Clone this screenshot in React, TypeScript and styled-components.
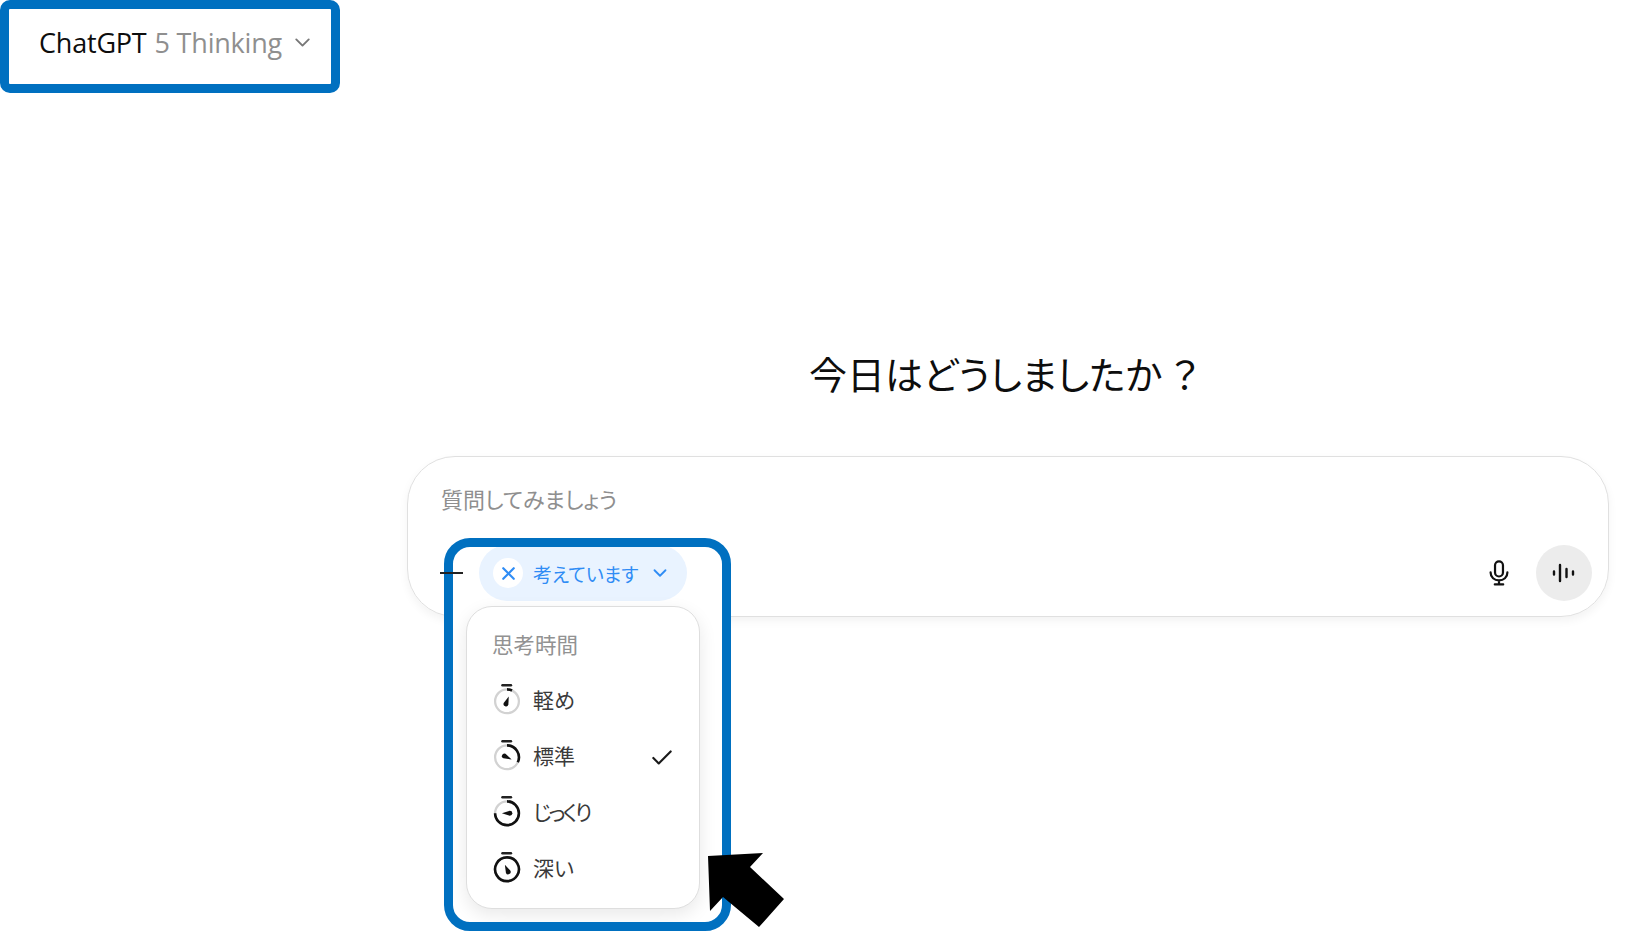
import { createGlobalStyle, styled } from "styled-components";
import { Check, ChevronDown, X } from "lucide-react";

const CJK = `"Noto Sans CJK JP", "Open Sans", sans-serif`;

const GlobalStyle = createGlobalStyle`
  html, body {
    margin: 0;
    padding: 0;
    background: #fff;
  }
`;

const Page = styled.div`
  position: relative;
  width: 1629px;
  height: 931px;
  overflow: hidden;
  background: #fff;
  font-family: ${CJK};
  font-feature-settings: "palt";
  color: #0d0d0d;
`;

const ModelBox = styled.div`
  box-sizing: border-box;
  width: 340px;
  height: 93px;
  padding: 0 0 8px 30px;
  display: flex;
  align-items: center;
  gap: 8px;
  border: 9px solid #0070c0;
  border-radius: 10px;
  font-family: "Open Sans", sans-serif;
  font-size: 27px;
  letter-spacing: -0.2px;
  white-space: nowrap;
`;

const ModelName = styled.span`
  color: #8f8f8f;
`;

const ModelChevron = styled(ChevronDown)`
  width: 25px;
  height: 25px;
  color: #777;
`;

const Heading = styled.h1`
  margin: 250px 0 0 809px;
  height: 60px;
  font-size: 38px;
  line-height: 60px;
  font-weight: 400;
  white-space: nowrap;
`;

const WideMark = styled.span`
  font-feature-settings: normal;
  margin-left: 4px;
`;

const Composer = styled.div`
  position: relative;
  box-sizing: border-box;
  width: 1202px;
  height: 161px;
  margin: 53px 0 0 407px;
  padding: 25px 16px 15px 33px;
  display: flex;
  flex-direction: column;
  justify-content: space-between;
  border: 1px solid #e0e0e0;
  border-radius: 48px;
  box-shadow: 0 4px 10px rgba(0, 0, 0, 0.05);
`;

const Placeholder = styled.div`
  font-size: 22px;
  line-height: 32px;
  color: #8f8f8f;
`;

const ComposerActions = styled.div`
  display: flex;
  justify-content: flex-end;
  align-items: center;
  gap: 23px;
`;

const MicIcon = styled.svg`
  width: 28px;
  height: 28px;
`;

const VoiceButton = styled.div`
  width: 56px;
  height: 56px;
  border-radius: 50%;
  background: #ececec;
  display: flex;
  align-items: center;
  justify-content: center;
`;

const VoiceIcon = styled.svg`
  width: 26px;
  height: 26px;
`;

const Frame = styled.div`
  position: absolute;
  left: 444px;
  top: 538px;
  box-sizing: border-box;
  width: 287px;
  height: 393px;
  padding: 0 21px 0 13px;
  border: 9px solid #0070c0;
  border-radius: 26px;
  background: #fff;
  display: flex;
  flex-direction: column;
  align-items: flex-start;
  overflow: hidden;
`;

const ThinkingPill = styled.div`
  flex: none;
  box-sizing: border-box;
  width: 208px;
  height: 56px;
  margin: -2px 0 0 13px;
  padding-left: 14px;
  border-radius: 28px;
  background: #e9f3ff;
  color: #2f8cf5;
  display: flex;
  align-items: center;
  font-size: 19px;
  white-space: nowrap;
`;

const ClearBadge = styled.span`
  width: 30px;
  height: 30px;
  margin-right: 10px;
  border-radius: 50%;
  background: #fff;
  display: flex;
  align-items: center;
  justify-content: center;
`;

const PillChevron = styled(ChevronDown)`
  width: 22px;
  height: 22px;
  margin-left: 11px;
`;

const Menu = styled.div`
  flex: none;
  box-sizing: border-box;
  width: 234px;
  height: 303px;
  margin: 5px 0 0 0;
  padding: 19px 0 0 25px;
  border: 1px solid #dedede;
  border-radius: 26px;
  background: #fff;
  box-shadow: 0 6px 18px rgba(0, 0, 0, 0.09);
`;

const MenuLabel = styled.div`
  height: 36px;
  margin-bottom: 9px;
  font-size: 21.5px;
  line-height: 36px;
  color: #929292;
`;

const MenuRow = styled.div`
  height: 56px;
  display: flex;
  align-items: center;
  font-size: 21px;
  color: #3a3a3a;
`;

const RowLabel = styled.span<{ $tight?: boolean }>`
  letter-spacing: ${({ $tight }) => ($tight ? "-2.6px" : "0")};
`;

const WatchIcon = styled.svg`
  flex: none;
  width: 30px;
  height: 34px;
  margin: 0 11px 0 0;
`;

const RowCheck = styled(Check)`
  margin-left: auto;
  margin-right: 24px;
  margin-top: 5px;
  width: 26px;
  height: 26px;
  color: #1a1a1a;
`;

const PlusStub = styled.div`
  position: absolute;
  left: 440px;
  top: 572px;
  width: 23px;
  height: 2px;
  background: #222;
`;

const Arrow = styled.svg`
  position: absolute;
  left: 700px;
  top: 845px;
  width: 90px;
  height: 86px;
`;

const polar = (deg: number, r: number) => {
  const a = ((deg - 90) * Math.PI) / 180;
  return [13 + r * Math.cos(a), 17 + r * Math.sin(a)];
};

function Stopwatch({ sweep, hand }: { sweep: number; hand: number }) {
  const [ex, ey] = polar(sweep >= 360 ? 359.9 : sweep, 10.5);
  const [tx, ty] = polar(hand, 4.5);
  const [bx, by] = polar(hand, -2.5);
  const [lx, ly] = polar(hand + 90, 2.2);
  const [rx, ry] = polar(hand - 90, 2.2);
  const dx = bx - 13;
  const dy = by - 17;
  return (
    <WatchIcon viewBox="0 0 26 30">
      <circle cx="13" cy="17" r="10.5" fill="none" stroke="#d2d2d2" strokeWidth="2" />
      <path
        d={`M13 6.5 A10.5 10.5 0 ${sweep > 180 ? 1 : 0} 1 ${ex} ${ey}`}
        fill="none"
        stroke="#111"
        strokeWidth="2.3"
      />
      <path d="M9 2.8 H16.5" stroke="#222" strokeWidth="2.2" strokeLinecap="round" />
      <path d={`M${tx} ${ty} L${lx + dx} ${ly + dy} A2.2 2.2 0 0 1 ${rx + dx} ${ry + dy} Z`} fill="#111" />
    </WatchIcon>
  );
}

const levels = [
  { label: "軽め", sweep: 25, hand: 20 },
  { label: "標準", sweep: 115, hand: 115, checked: true },
  { label: "じっくり", sweep: 270, hand: 270, tight: true },
  { label: "深い", sweep: 360, hand: 335 },
];

export default function App() {
  return (
    <Page>
      <GlobalStyle />
      <ModelBox>
        <span>ChatGPT</span>
        <ModelName>5 Thinking</ModelName>
        <ModelChevron strokeWidth={1.8} />
      </ModelBox>

      <Heading>
        今日はどうしましたか<WideMark>？</WideMark>
      </Heading>

      <Composer>
        <Placeholder>質問してみましょう</Placeholder>
        <ComposerActions>
          <MicIcon viewBox="0 0 24 24" fill="none" stroke="#111" strokeWidth="1.9" strokeLinecap="round">
            <rect x="8.6" y="2" width="6.8" height="13" rx="3.4" />
            <path d="M4.8 11.5c0 4.2 3.2 6.8 7.2 6.8s7.2-2.6 7.2-6.8M12 18.3v3.4M8.4 21.8h7.2" />
          </MicIcon>
          <VoiceButton>
            <VoiceIcon viewBox="0 0 26 26" stroke="#111" strokeWidth="2.4" strokeLinecap="round">
              <path d="M3 11.5v3M9 5v16M15.5 9v8M22 11.5v3" />
            </VoiceIcon>
          </VoiceButton>
        </ComposerActions>
      </Composer>

      <Frame>
        <ThinkingPill>
          <ClearBadge>
            <X size={21} strokeWidth={2.5} />
          </ClearBadge>
          考えています
          <PillChevron strokeWidth={2} />
        </ThinkingPill>
        <Menu>
          <MenuLabel>思考時間</MenuLabel>
          {levels.map((level) => (
            <MenuRow key={level.label}>
              <Stopwatch sweep={level.sweep} hand={level.hand} />
              <RowLabel $tight={level.tight}>{level.label}</RowLabel>
              {level.checked && <RowCheck strokeWidth={2} />}
            </MenuRow>
          ))}
        </Menu>
      </Frame>

      <PlusStub />

      <Arrow viewBox="700 845 90 86">
        <polygon points="708,856 763,853 750,867 784,899 759,927 723,897 710,911" fill="#000" />
      </Arrow>
    </Page>
  );
}
